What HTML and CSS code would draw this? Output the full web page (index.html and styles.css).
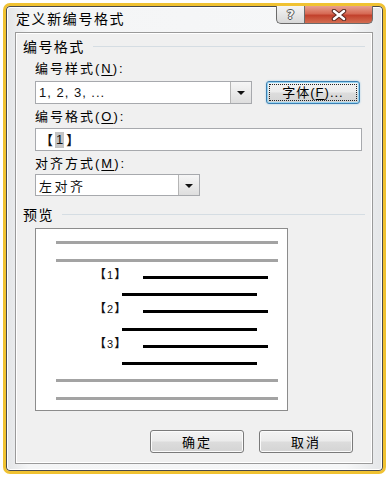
FILE: index.html
```html
<!DOCTYPE html>
<html lang="zh-CN">
<head>
    <meta charset="UTF-8" />
    <meta name="viewport" content="width=device-width, initial-scale=1.0" />
    <title>定义新编号格式</title>
    <link rel="stylesheet" href="styles.css">
</head>
<body>
    <div class="frame">
        <div class="titlebar">
            <span class="title">定义新编号格式</span>
            <div class="caption-buttons">
                <button class="cap-help"><span>?</span></button>
                <button class="cap-close">
                    <svg width="20" height="12" viewBox="0 0 20 12">
                        <path d="M5 2 L15 10 M15 2 L5 10" stroke="#5a2a22" stroke-width="4.5" stroke-linecap="round" />
                        <path d="M5 2 L15 10 M15 2 L5 10" stroke="#ffffff" stroke-width="2.5" stroke-linecap="round" />
                    </svg>
                </button>
            </div>
        </div>

        <div class="content">
            <div class="group-head">
                <span>编号格式</span>
                <div class="group-line"></div>
            </div>

            <p class="field-label">编号样式(<u>N</u>):</p>
            <div class="row">
                <div class="select select-style">
                    <span class="select-text">1, 2, 3, ...</span>
                    <span class="drop"><i class="arrow"></i></span>
                </div>
                <button class="btn btn-font"><span class="focus">字体(<u>F</u>)...</span></button>
            </div>

            <p class="field-label gap-sm">编号格式(<u>O</u>):</p>
            <div class="textbox"><b>【</b><span class="sel">1</span><b>】</b></div>

            <p class="field-label gap-sm">对齐方式(<u>M</u>):</p>
            <div class="select select-align">
                <span class="select-text">左对齐</span>
                <span class="drop"><i class="arrow"></i></span>
            </div>

            <div class="group-head gap-lg">
                <span>预览</span>
                <div class="group-line"></div>
            </div>

            <div class="preview">
                <div class="pline gray"></div>
                <div class="pline gray wide"></div>
                <div class="pnum"><span class="num">【<em>1</em>】</span><div class="bar"></div></div>
                <div class="pline black second"></div>
                <div class="pnum"><span class="num">【<em>2</em>】</span><div class="bar"></div></div>
                <div class="pline black second wide"></div>
                <div class="pnum"><span class="num">【<em>3</em>】</span><div class="bar"></div></div>
                <div class="pline black second"></div>
                <div class="pline gray"></div>
                <div class="pline gray wide"></div>
            </div>

            <div class="actions">
                <button class="btn">确定</button>
                <button class="btn">取消</button>
            </div>
        </div>
    </div>
</body>
</html>
```

FILE: styles.css
```css
* {
    margin: 0;
    padding: 0;
    box-sizing: border-box;
}

body {
    width: 390px;
    height: 478px;
    background-color: #ffffff;
    font-family: 'Liberation Sans', 'Noto Sans CJK SC', sans-serif;
    font-size: 13px;
    color: #111;
    overflow: hidden;
}

u {
    text-decoration: underline;
    text-underline-offset: 2px;
}

.frame {
    margin: 3px 0 0 3px;
    width: 383px;
    height: 471px;
    border: 3px solid #f0c232;
    border-radius: 7px;
    box-shadow: inset 0 0 0 1px #4a4a4a, inset 0 0 0 2px #ffffff;
    background: linear-gradient(90deg, #e2e4e6 0%, #f4f5f6 6%, #f6f7f8 90%, #e4e6e8 100%);
    padding: 1px 10px 7px 9px;
    display: flex;
    flex-direction: column;
}

/* title bar */
.titlebar {
    height: 25px;
    display: flex;
    justify-content: space-between;
    align-items: flex-start;
}

.title {
    font-size: 14px;
    letter-spacing: 1.6px;
    line-height: 25px;
    padding-left: 1px;
    color: #000;
}

.caption-buttons {
    display: flex;
    margin-top: -1px;
}

.caption-buttons button {
    height: 18px;
    border: 1px solid #6b6b6b;
    border-top: none;
    cursor: pointer;
    display: flex;
    align-items: center;
    justify-content: center;
}

.cap-help {
    width: 28px;
    border-radius: 0 0 0 5px;
    background: linear-gradient(#f4f4f4, #d8d8d8);
    border-right: none !important;
}

.cap-help span {
    font-family: 'DejaVu Sans', sans-serif;
    font-weight: bold;
    font-size: 13px;
    color: #f2f2f2;
    text-shadow: 1px 0 0 #555, -1px 0 0 #555, 0 1px 0 #555, 0 -1px 0 #555;
}

.cap-close {
    width: 69px;
    border-radius: 0 0 5px 0;
    background: linear-gradient(#e8a08f 0%, #d66a55 45%, #c2412c 55%, #d46e52 100%);
}

/* content */
.content {
    flex: 1;
    border: 1px solid #9a9a9a;
    box-shadow: inset 0 0 0 1px #ffffff;
    background-color: #f0f0f0;
    padding: 0 9px 0 7px;
    display: flex;
    flex-direction: column;
    letter-spacing: 2px;
}

.group-head {
    margin-top: 4px;
    height: 18px;
    display: flex;
    align-items: center;
    gap: 8px;
    font-size: 14px;
    letter-spacing: 1.4px;
    color: #000;
}

.group-head.gap-lg {
    margin-top: 9px;
}

.group-line {
    flex: 1;
    height: 1px;
    margin-right: -2px;
    background-color: #d5dde3;
}

.field-label {
    margin: 5px 0 0 12px;
    line-height: 18px;
    color: #000;
}

.field-label.gap-sm {
    margin-top: 4px;
}

.row {
    margin: 3px 0 0 12px;
    display: flex;
    gap: 14px;
}

.select {
    height: 23px;
    background-color: #ffffff;
    border: 1px solid #a7a9ad;
    display: flex;
    align-items: center;
    justify-content: space-between;
}

.select-style {
    width: 217px;
}

.select-align {
    width: 165px;
    height: 22px;
    margin: 1px 0 0 12px;
}

.select-text {
    padding-left: 3px;
    letter-spacing: 1px;
}

.select-align .select-text {
    letter-spacing: 2.5px;
}

.drop {
    width: 21px;
    height: 100%;
    border-left: 1px solid #b5b5b5;
    background: linear-gradient(#f6f6f6, #dedede);
    display: flex;
    align-items: center;
    justify-content: center;
}

.arrow {
    width: 0;
    height: 0;
    border-left: 4px solid transparent;
    border-right: 4px solid transparent;
    border-top: 4px solid #111;
    margin-top: 1px;
}

.textbox {
    margin: 2px 0 0 12px;
    width: 327px;
    height: 23px;
    background-color: #ffffff;
    border: 1px solid #a7a9ad;
    display: flex;
    align-items: center;
    padding-left: 4px;
    letter-spacing: 0;
}

.textbox b {
    font-family: 'Noto Sans CJK SC', sans-serif;
    font-size: 13px;
}

.sel {
    background-color: #c4c4c4;
    font-family: 'Liberation Sans', sans-serif;
    margin: 0 2px;
    padding: 0 1px;
    line-height: 16px;
}

/* buttons */
.btn {
    width: 94px;
    height: 23px;
    border: 1px solid #7a7a7a;
    border-radius: 3px;
    background: linear-gradient(#f3f3f3 0%, #ebebeb 48%, #dcdcdc 52%, #d4d4d4 100%);
    box-shadow: inset 0 0 0 1px #fbfbfb;
    font-family: 'Liberation Sans', 'Noto Sans CJK SC', sans-serif;
    font-size: 13px;
    letter-spacing: 2px;
    color: #000;
    cursor: pointer;
}

.btn-font {
    border-color: #3c7fb1;
    box-shadow: inset 0 0 0 1px #97d4f2, 0 0 2px #9ccbe8;
    padding: 2px;
}

.btn-font .focus {
    display: block;
    height: 100%;
    border: 1px dotted #222;
    line-height: 15px;
    letter-spacing: 1px;
}

/* preview */
.preview {
    margin: 5px 0 0 12px;
    width: 253px;
    height: 183px;
    background-color: #ffffff;
    border: 1px solid #8c8c8c;
    padding-top: 12px;
    display: flex;
    flex-direction: column;
    letter-spacing: 0;
}

.pline {
    height: 3px;
    margin-top: 14px;
}

.pline:first-child {
    margin-top: 0;
}

.pline.wide,
.pnum + .pline.wide {
    margin-top: 15px;
}

.gray {
    margin-left: 20px;
    width: 222px;
    background-color: #a3a3a3;
}

.black {
    background-color: #000;
}

.second {
    margin-left: 86px;
    width: 135px;
}

.pnum {
    height: 3px;
    margin-top: 14px;
    display: flex;
    align-items: center;
}

.num {
    margin-left: 58px;
    width: 49px;
    margin-bottom: 6px;
    font-family: 'Noto Sans CJK SC', sans-serif;
    font-weight: bold;
    font-size: 12px;
    line-height: 14px;
    white-space: nowrap;
}

.num em {
    font-style: normal;
    font-weight: normal;
    font-family: 'Liberation Sans', sans-serif;
    font-size: 11px;
    margin: 0 1px;
}

.bar {
    width: 125px;
    height: 3px;
    background-color: #000;
}

.actions {
    margin: 19px 10px 0 0;
    display: flex;
    justify-content: flex-end;
    gap: 15px;
}
```
